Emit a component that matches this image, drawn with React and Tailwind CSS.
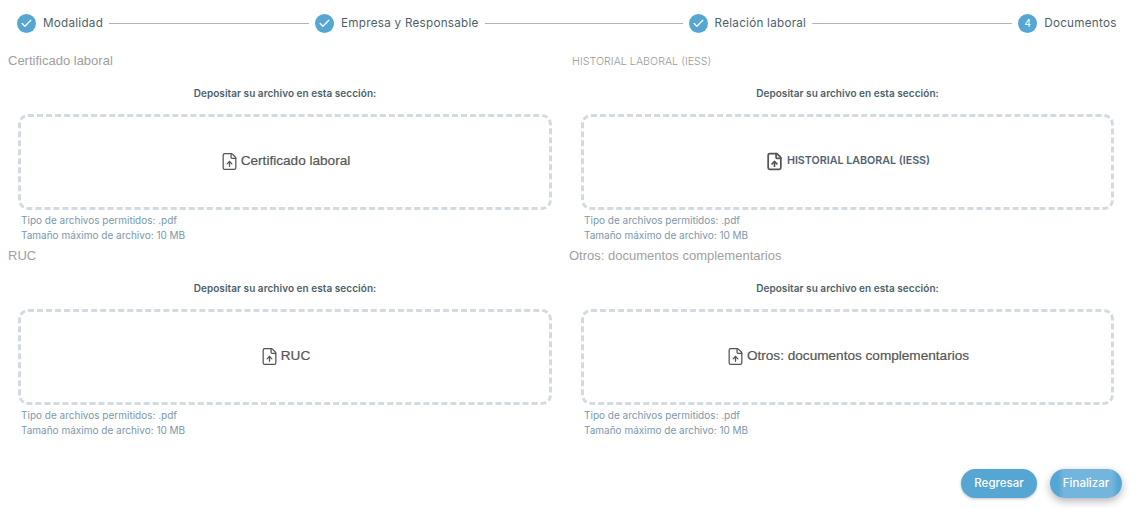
import {Check, FileUp} from "lucide-react";

const font = "font-['Inter','Noto_Sans',sans-serif]";

const steps = [
    {label: "Modalidad", line: "w-[200px]"},
    {label: "Empresa y Responsable", line: "w-[198px]"},
    {label: "Relación laboral", line: "w-[200px]"},
    {label: "Documentos", number: 4},
];

const sections = [
    {title: "Certificado laboral"},
    {title: "HISTORIAL LABORAL (IESS)", caps: true},
    {title: "RUC"},
    {title: "Otros: documentos complementarios", shifted: true},
];

function Step({step}) {
    return (
        <>
            <span className="flex size-[19px] shrink-0 items-center justify-center rounded-full bg-[#56a6d3] text-[10px] text-white">
                {step.number ?? <Check size={13} strokeWidth={2.5}/>}
            </span>
            <span className="ml-[7px] text-[11.7px] tracking-[0.25px] text-[#4d5f6b] whitespace-nowrap">{step.label}</span>
            {step.line && <span className={`mx-[6px] h-px bg-[#b5b5b5] ${step.line}`}/>}
        </>
    );
}

function Section({title, caps, shifted}) {
    return (
        <div className="h-[195px]">
            <h3 className={caps
                ? "pt-[1px] h-[21px] text-[10.7px] leading-[20px] font-light text-[#9a9a9a] whitespace-nowrap"
                : `h-[21px] font-['Liberation_Sans',sans-serif] text-[13px] leading-[20px] text-[#a0a0a0] whitespace-nowrap ${shifted ? "-ml-[3px]" : ""}`}>
                {title}
            </h3>
            <div className={caps || shifted ? "ml-[9px] mr-[22px]" : "ml-[10px] mr-[20px]"}>
                <p className="mt-[15px] h-[27px] text-center text-[10px] leading-[12px] font-semibold tracking-[0.05px] text-[#4d5f6b]">
                    Depositar su archivo en esta sección:
                </p>
                <div className="flex h-[96px] items-center justify-center gap-[2px] rounded-[10px] border-[3px] border-dashed border-[#d3dbe2] pb-[2px]">
                    <FileUp size={19} strokeWidth={caps ? 2.2 : 1.6} className="text-[#555555]"/>
                    {caps ? (
                        <span className="ml-[1px] text-[10.7px] font-semibold text-[#4f6272]">{title}</span>
                    ) : (
                        <span className="font-['Liberation_Sans',sans-serif] text-[13.6px] font-medium text-[#555555] [-webkit-text-stroke:0.2px_#555555]">{title}</span>
                    )}
                </div>
                <div className="mt-[3px] ml-[3px] text-[10px] leading-[15px] text-[#7c97ad]">
                    <p>Tipo de archivos permitidos: .pdf</p>
                    <p>Tamaño máximo de archivo: 10 MB</p>
                </div>
            </div>
        </div>
    );
}

export default function App() {
    return (
        <div className={`relative h-[508px] w-[1146px] overflow-hidden bg-white ${font}`}>
            <div className="flex h-[47px] items-center pl-[17px]">
                {steps.map((s) => <Step key={s.label} step={s}/>)}
            </div>
            <div className="mt-[4px] grid grid-cols-[564px_564px] pl-[8px]">
                {sections.map((s) => <Section key={s.title} {...s}/>)}
            </div>
            <div className="mt-[28px] flex justify-end gap-[13px] pr-[24px]">
                <button className="h-[29px] w-[76px] rounded-full bg-[#56a6d3] text-[11.5px] font-medium text-white shadow-[0_1px_3px_rgba(0,0,0,0.25)]">
                    Regresar
                </button>
                <button className="h-[29px] w-[72px] rounded-full bg-[linear-gradient(90deg,#56a6d3_0,#56a6d3_8px,#74b5dd_14px,#74b5dd_62px,#56a6d3_68px)] text-[11.5px] font-medium text-white shadow-[0_3px_8px_rgba(0,0,0,0.3)]">
                    Finalizar
                </button>
            </div>
        </div>
    );
}
